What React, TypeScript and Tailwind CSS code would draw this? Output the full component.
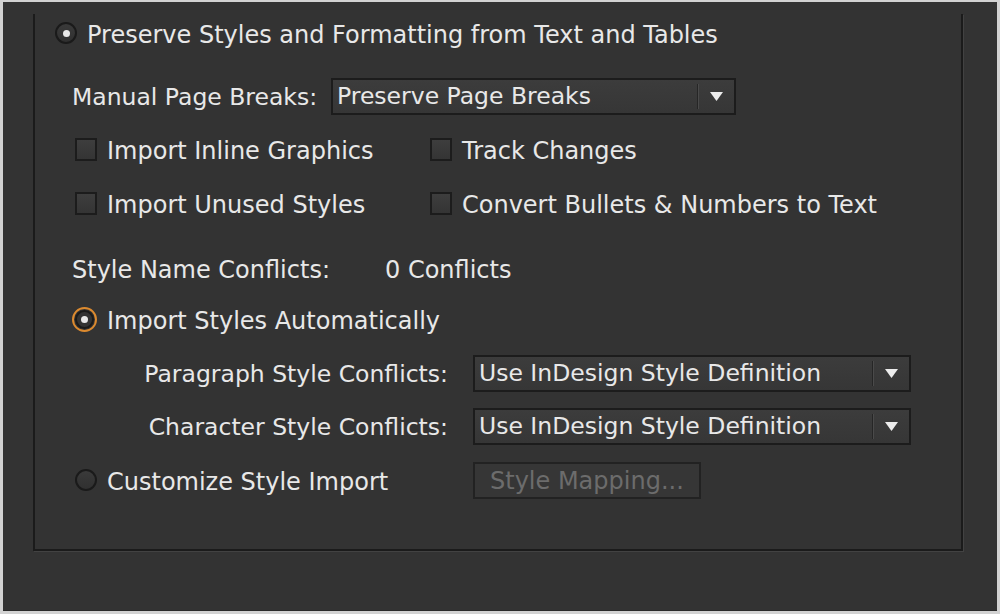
import React from "react";

const font = { fontFamily: '"DejaVu Sans", "Liberation Sans", sans-serif' };

function Radio({ checked, focus }: { checked?: boolean; focus?: boolean }) {
  if (focus) {
    return (
      <div className="w-[25px] h-[25px] rounded-full border-2 border-[#dc8a2f] flex items-center justify-center shrink-0">
        <div className="w-[19px] h-[19px] rounded-full border-2 border-[#1a1a1a] bg-[#333333] flex items-center justify-center">
          <div className="w-[7px] h-[7px] rounded-full bg-[#e8e8e8]" />
        </div>
      </div>
    );
  }
  return (
    <div className="w-[22px] h-[22px] rounded-full border-2 border-[#1a1a1a] bg-gradient-to-b from-[#3a3a3a] to-[#303030] flex items-center justify-center shrink-0">
      {checked && <div className="w-[7px] h-[7px] rounded-full bg-[#e8e8e8]" />}
    </div>
  );
}

function Checkbox() {
  return (
    <div className="w-[22px] h-[23px] border-2 border-[#1c1c1c] bg-gradient-to-b from-[#3e3e3e] to-[#343434] shrink-0" />
  );
}

function Dropdown({ label, w }: { label: string; w: string }) {
  return (
    <div className={`${w} h-[37px] border-2 border-[#1c1c1c] bg-gradient-to-b from-[#3c3c3c] to-[#363636] flex items-center`}>
      <span className="flex-1 pl-[4px] pt-[2px] text-[23.5px] text-[#e8e8e8] leading-none whitespace-nowrap">{label}</span>
      <div className="flex h-[25px]">
        <div className="w-px bg-[#262626]" />
        <div className="w-px bg-[#4a4a4a]" />
      </div>
      <div className="w-[35px] flex items-center justify-center">
        <svg width="13" height="9" viewBox="0 0 13 9">
          <path d="M0 0 H13 L6.5 9 Z" fill="#ececec" />
        </svg>
      </div>
    </div>
  );
}

export default function App() {
  return (
    <div className="w-[1000px] h-[614px] bg-[#d2d2d2] pt-[2px] px-[3px] pb-[3px]" style={font}>
      <div className="w-full h-full bg-[#333333] border-b border-[#2a2a2a] overflow-hidden">
        <div className="ml-[30px] w-[930px] h-[537px] border-x-2 border-b-2 border-[#1b1b1b] shadow-[1px_1px_0_#424242] text-[#e8e8e8] text-[24px] leading-none">
          <div className="h-[38px] mt-[12px] flex items-center pl-[20px]">
            <Radio checked />
            <span className="ml-[10px] pt-[3px] whitespace-nowrap">Preserve Styles and Formatting from Text and Tables</span>
          </div>
          <div className="h-[38px] mt-[25px] flex items-center pl-[37px]">
            <span className="w-[259px] pt-[3px] text-[23.5px] whitespace-nowrap">Manual Page Breaks:</span>
            <Dropdown label="Preserve Page Breaks" w="w-[405px]" />
          </div>
          <div className="h-[26px] mt-[21px] flex items-center pl-[40px]">
            <div className="w-[355px] flex items-center">
              <Checkbox />
              <span className="ml-[10px] pt-[3px] whitespace-nowrap">Import Inline Graphics</span>
            </div>
            <Checkbox />
            <span className="ml-[10px] pt-[3px] whitespace-nowrap">Track Changes</span>
          </div>
          <div className="h-[26px] mt-[28px] flex items-center pl-[40px]">
            <div className="w-[355px] flex items-center">
              <Checkbox />
              <span className="ml-[10px] pt-[3px] whitespace-nowrap">Import Unused Styles</span>
            </div>
            <Checkbox />
            <span className="ml-[10px] pt-[3px] whitespace-nowrap">Convert Bullets &amp; Numbers to Text</span>
          </div>
          <div className="h-[26px] mt-[39px] flex items-center pl-[37px]">
            <span className="w-[313px] pt-[3px] whitespace-nowrap">Style Name Conflicts:</span>
            <span className="pt-[3px] whitespace-nowrap">0 Conflicts</span>
          </div>
          <div className="h-[26px] mt-[25px] flex items-center pl-[37px]">
            <Radio checked focus />
            <span className="ml-[10px] pt-[3px] whitespace-nowrap">Import Styles Automatically</span>
          </div>
          <div className="h-[38px] mt-[22px] flex items-center">
            <span className="w-[413px] pt-[3px] text-[23.5px] text-right whitespace-nowrap">Paragraph Style Conflicts:</span>
            <div className="ml-[25px]">
              <Dropdown label="Use InDesign Style Definition" w="w-[438px]" />
            </div>
          </div>
          <div className="h-[38px] mt-[15px] flex items-center">
            <span className="w-[413px] pt-[3px] text-[23.5px] text-right whitespace-nowrap">Character Style Conflicts:</span>
            <div className="ml-[25px]">
              <Dropdown label="Use InDesign Style Definition" w="w-[438px]" />
            </div>
          </div>
          <div className="h-[38px] mt-[16px] flex items-center pl-[40px]">
            <div className="w-[398px] flex items-center">
              <Radio />
              <span className="ml-[10px] pt-[3px] whitespace-nowrap">Customize Style Import</span>
            </div>
            <div className="w-[228px] h-[37px] border-2 border-[#222222] bg-[#363636] flex items-center pl-[15px]">
              <span className="pt-[2px] text-[#6c6c6c] whitespace-nowrap">Style Mapping...</span>
            </div>
          </div>
        </div>
      </div>
    </div>
  );
}
